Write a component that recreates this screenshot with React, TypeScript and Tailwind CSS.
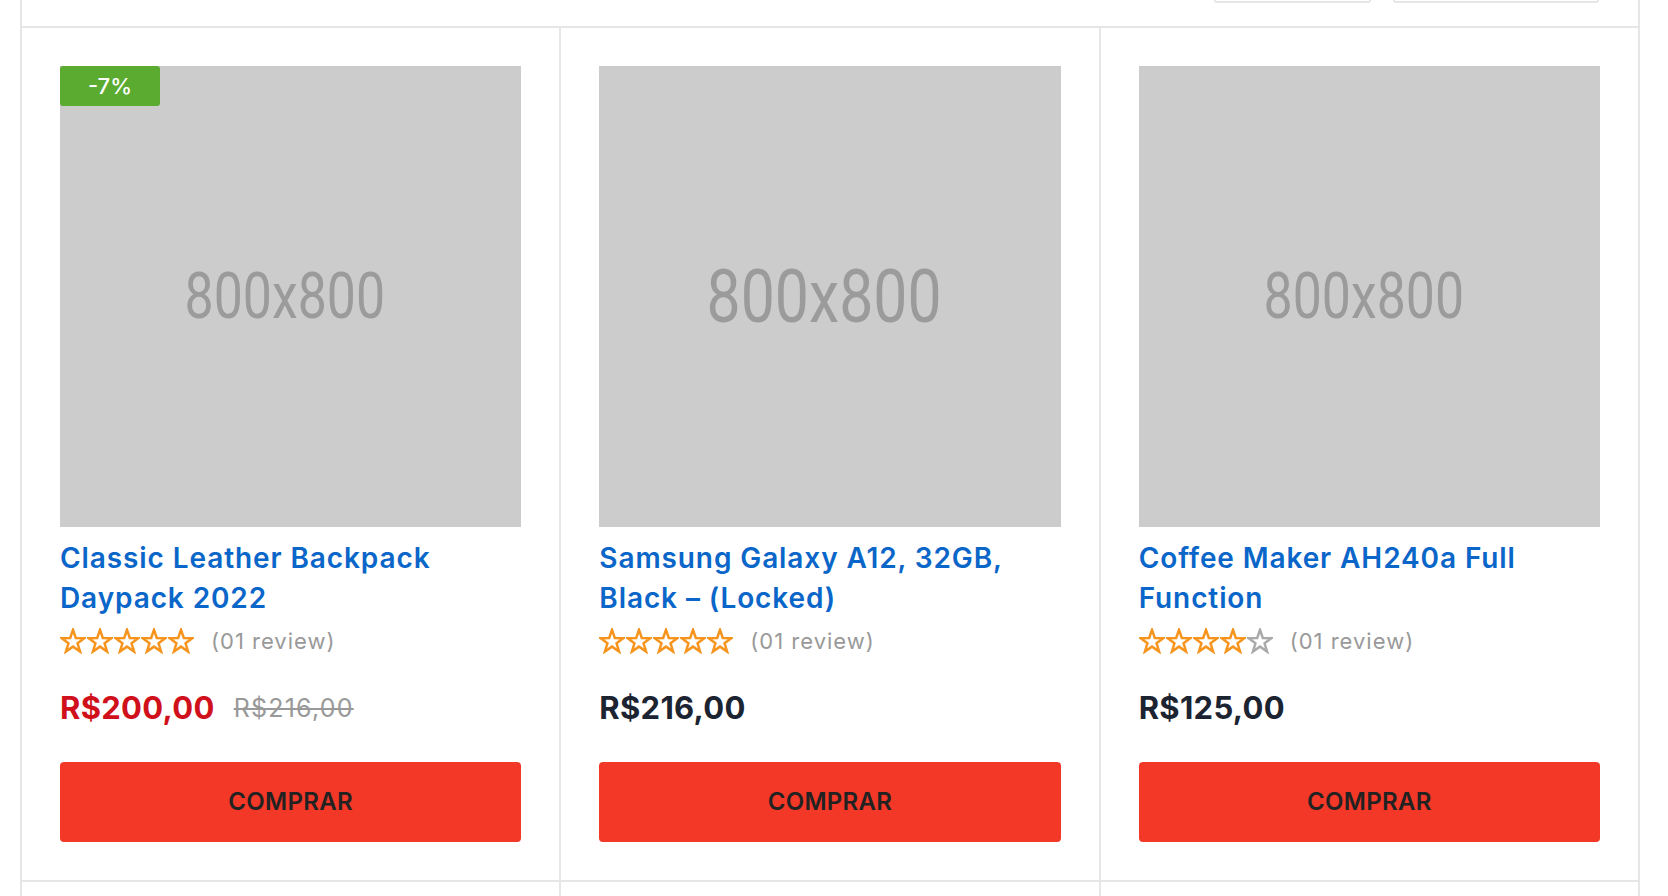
import React from 'react';

type Product = {
  title: string;
  rating: number;
  price: string;
  oldPrice?: string;
  badge?: string;
  bigPlaceholder?: boolean;
};

const products: Product[] = [
  { title: 'Classic Leather Backpack Daypack 2022', rating: 5, price: 'R$200,00', oldPrice: 'R$216,00', badge: '-7%' },
  { title: 'Samsung Galaxy A12, 32GB, Black – (Locked)', rating: 5, price: 'R$216,00', bigPlaceholder: true },
  { title: 'Coffee Maker AH240a Full Function', rating: 4, price: 'R$125,00' },
];

const Star = ({ on }: { on: boolean }) => (
  <svg viewBox="-0.5 -0.5 25 25" className="h-[26px] w-[26px]">
    <polygon
      points="12,1.3 14.7,9.08 22.94,9.25 16.37,14.22 18.76,22.1 12,17.4 5.24,22.1 7.63,14.22 1.06,9.25 9.3,9.08"
      fill="none"
      stroke={on ? '#f7941d' : '#aaaaaa'}
      strokeWidth="2.4"
      strokeLinejoin="miter"
    />
  </svg>
);

const ProductCard = ({ p }: { p: Product }) => (
  <div className="border-r-2 border-b-2 border-[#e6e6e6] px-[38px] pt-[38px] pb-[38px]">
    {/* imagem placeholder */}
    <div className="relative flex aspect-square w-full items-center justify-center overflow-hidden bg-[#cccccc]">
      <span
        className={`inline-block -translate-x-[6px] scale-x-[0.81] font-['Roboto',sans-serif] leading-none text-[#9b9b9b] ${
          p.bigPlaceholder ? 'text-[75px]' : 'text-[64px]'
        }`}
      >
        800x800
      </span>
      {p.badge && (
        <span className="absolute left-0 top-0 flex h-[40px] w-[100px] items-center justify-center rounded-[3px] bg-[#5aab2f] text-[22px] font-medium text-white">
          {p.badge}
        </span>
      )}
    </div>

    <h3 className="mt-[11px] h-[80px] text-[28px] leading-[40px] font-semibold tracking-[0.9px] text-[#0a66c8]">
      {p.title}
    </h3>

    <div className="mt-[8px] flex h-[30px] items-center">
      <div className="flex gap-[1px]">
        {[0, 1, 2, 3, 4].map((i) => (
          <Star key={i} on={i < p.rating} />
        ))}
      </div>
      <span className="ml-[17px] text-[22px] tracking-[1px] text-[#999999]">(01 review)</span>
    </div>

    <div className="mt-[32px] flex h-[40px] items-center gap-[19px]">
      <span className={`text-[31px] font-bold tracking-[0.3px] ${p.oldPrice ? 'text-[#d0111b]' : 'text-[#1c2331]'}`}>
        {p.price}
      </span>
      {p.oldPrice && (
        <span className="text-[25px] tracking-[1.2px] text-[#999999] line-through decoration-[2px]">{p.oldPrice}</span>
      )}
    </div>

    <button className="mt-[34px] flex h-[80px] w-full items-center justify-center rounded-[4px] bg-[#f33827] text-[24px] font-semibold tracking-[0.3px] text-[#222222]">
      COMPRAR
    </button>
  </div>
);

export default function App() {
  return (
    <div className="h-screen overflow-hidden bg-white font-['Inter',sans-serif]">
      <div className="ml-[20px] w-[1620px] border-l-2 border-[#e6e6e6]">
        {/* barra de filtros (só as bordas inferiores aparecem) */}
        <div className="flex h-[26px] justify-end gap-[22px] border-r-2 border-[#e6e6e6] pr-[39px]">
          <div className="h-[3px] w-[157px] rounded-b-[4px] border-x-2 border-b-2 border-[#e6e6e6]" />
          <div className="h-[3px] w-[206px] rounded-b-[4px] border-x-2 border-b-2 border-[#e6e6e6]" />
        </div>

        <div className="grid grid-cols-3 border-t-2 border-[#e6e6e6]">
          {products.map((p, i) => (
            <ProductCard key={i} p={p} />
          ))}
          {/* próxima linha de produtos, abaixo da dobra */}
          <div className="h-[60px] border-r-2 border-[#e6e6e6]" />
          <div className="h-[60px] border-r-2 border-[#e6e6e6]" />
          <div className="h-[60px] border-r-2 border-[#e6e6e6]" />
        </div>
      </div>
    </div>
  );
}
